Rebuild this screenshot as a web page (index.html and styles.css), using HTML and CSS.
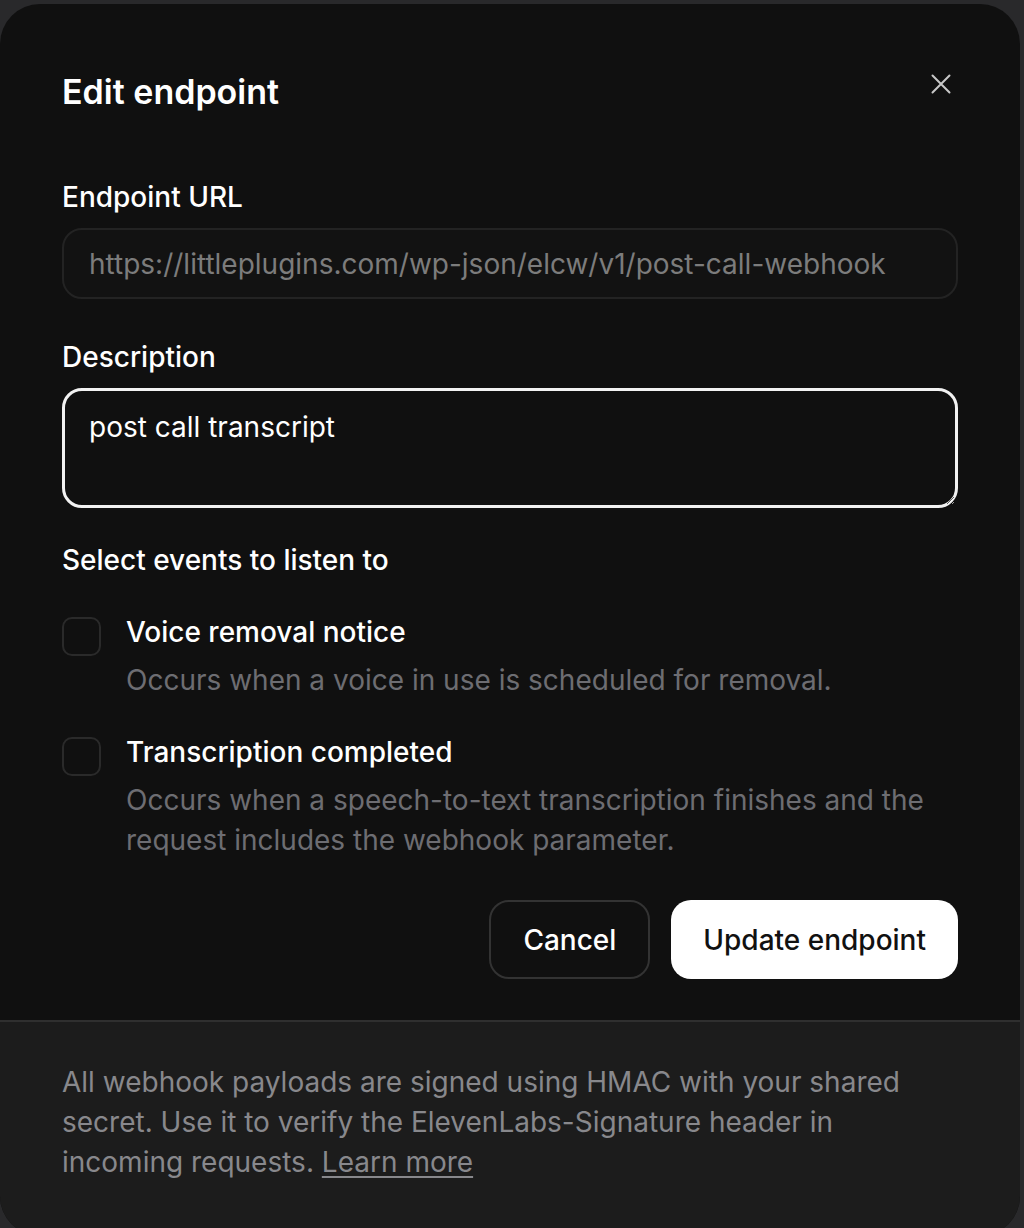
FILE: index.html
```html
<!DOCTYPE html>
<html lang="en">
<head>
    <meta charset="UTF-8">
    <meta name="viewport" content="width=device-width, initial-scale=1.0">
    <title>Edit endpoint</title>
    <link rel="stylesheet" href="styles.css">
</head>
<body>
    <div class="modal">
        <div class="modal-body">
            <div class="modal-header">
                <h2>Edit endpoint</h2>
                <button type="button" class="close-button" aria-label="Close">
                    <svg width="20" height="20" viewBox="0 0 20 20" fill="none" stroke="currentColor" stroke-width="2" stroke-linecap="round">
                        <path d="M1.5 1.5L18.5 18.5M18.5 1.5L1.5 18.5"/>
                    </svg>
                </button>
            </div>

            <label class="field-label" for="url">Endpoint URL</label>
            <input type="text" id="url" class="text-input" placeholder="https://littleplugins.com/wp-json/elcw/v1/post-call-webhook">

            <label class="field-label" for="description">Description</label>
            <textarea id="description" class="text-area">post call transcript</textarea>

            <p class="section-label">Select events to listen to</p>
            <div class="event-list">
                <div class="event-item">
                    <span class="checkbox"></span>
                    <div class="event-text">
                        <div class="event-title">Voice removal notice</div>
                        <div class="event-desc">Occurs when a voice in use is scheduled for removal.</div>
                    </div>
                </div>
                <div class="event-item">
                    <span class="checkbox"></span>
                    <div class="event-text">
                        <div class="event-title">Transcription completed</div>
                        <div class="event-desc">Occurs when a speech-to-text transcription finishes and the request includes the webhook parameter.</div>
                    </div>
                </div>
            </div>

            <div class="button-container">
                <button type="button" class="btn btn-secondary">Cancel</button>
                <button type="button" class="btn btn-primary">Update endpoint</button>
            </div>
        </div>
        <div class="modal-footer">
            All webhook payloads are signed using HMAC with your shared secret. Use it to verify the ElevenLabs-Signature header in incoming requests. <a href="#">Learn more</a>
        </div>
    </div>
</body>
</html>
```

FILE: styles.css
```css
* {
    box-sizing: border-box;
}
body {
    margin: 0;
    padding-top: 4px;
    background-color: #29292b;
    font-family: Inter, "Noto Sans", sans-serif;
    color: #fff;
    overflow: hidden;
}
.modal {
    width: 1020px;
    background: #101010;
    border-radius: 40px;
    overflow: hidden;
}
.modal-body {
    padding: 68px 62px 41px;
}
.modal-header {
    display: flex;
    justify-content: space-between;
    align-items: flex-start;
    margin-bottom: 67px;
}
.modal-header h2 {
    margin: 0;
    font-size: 34px;
    line-height: 40px;
    font-weight: 600;
}
.close-button {
    background: none;
    border: none;
    padding: 0;
    margin: 2px 7px 0 0;
    color: #c8c8c8;
    cursor: pointer;
    width: 20px;
    height: 20px;
}
.field-label {
    display: block;
    font-size: 28px;
    line-height: 36px;
    font-weight: 500;
    margin-bottom: 13px;
}
.text-input {
    display: block;
    width: 100%;
    height: 71px;
    padding: 0 25px;
    margin-bottom: 40px;
    background: #121212;
    border: 2px solid #232323;
    border-radius: 20px;
    font-family: inherit;
    font-size: 28px;
    color: #fff;
    outline: none;
}
.text-input::placeholder {
    color: #7c7c7c;
}
.text-area {
    display: block;
    width: 100%;
    height: 120px;
    padding: 18px 24px;
    margin-bottom: 34px;
    background: #101010;
    border: 3px solid #f2f2f2;
    border-radius: 20px;
    font-family: inherit;
    font-size: 28px;
    line-height: 36px;
    color: #fff;
    resize: vertical;
    outline: none;
}
.section-label {
    margin: 0 0 36px;
    font-size: 28px;
    line-height: 36px;
    font-weight: 500;
}
.event-list {
    display: flex;
    flex-direction: column;
    gap: 34px;
}
.event-item {
    display: flex;
    gap: 25px;
}
.checkbox {
    flex: none;
    width: 39px;
    height: 39px;
    margin-top: 3px;
    border: 2px solid #2a2a2a;
    border-radius: 10px;
}
.event-title {
    font-size: 28px;
    line-height: 36px;
    font-weight: 500;
}
.event-desc {
    margin-top: 10px;
    font-size: 28px;
    line-height: 40px;
    color: #6d6d72;
}
.button-container {
    display: flex;
    justify-content: flex-end;
    gap: 21px;
    margin-top: 40px;
}
.btn {
    height: 79px;
    padding: 0 32px;
    border-radius: 20px;
    font-family: inherit;
    font-size: 28px;
    font-weight: 500;
    cursor: pointer;
}
.btn-secondary {
    background: #101010;
    color: #fff;
    border: 2px solid #333;
}
.btn-primary {
    background: #fff;
    color: #111;
    border: none;
}
.modal-footer {
    background: #1c1c1c;
    border-top: 2px solid #2f2f2f;
    padding: 40px 62px 54px;
    font-size: 28px;
    line-height: 40px;
    color: #88888c;
}
.modal-footer a {
    color: #88888c;
    text-decoration: underline;
    text-underline-offset: 4px;
}
```
